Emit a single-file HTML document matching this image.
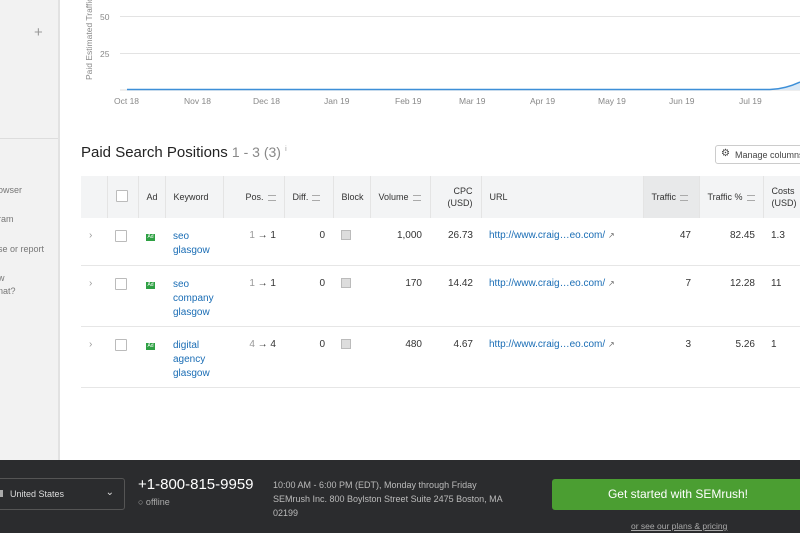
<!DOCTYPE html>
<html><head><meta charset="utf-8"><style>
*{box-sizing:border-box;margin:0;padding:0}
body{width:800px;height:533px;overflow:hidden;background:#fff;font-family:"Liberation Sans",sans-serif;color:#333;position:relative}
.side{position:absolute;left:0;top:0;width:60px;height:460px;background:#f2f2f2;border-right:2px solid #e2e2e2}
.side .sep{position:absolute;top:138px;left:0;width:58px;height:1px;background:#ddd}
.side .t{position:absolute;left:-2px;font-size:9px;color:#777;white-space:nowrap;line-height:13px}
.plus{position:absolute;left:34px;top:24px;font-size:15px;color:#999}
.ax{position:absolute;font-size:8.5px;color:#888}
.h{position:absolute;left:81px;top:144px;font-size:15px;color:#222}
.h span{color:#888;font-size:14px}
.mc{position:absolute;left:715px;top:145px;width:100px;height:19px;border:1px solid #ccc;border-radius:3px;font-size:9px;color:#444;padding:4px 0 0 19px;background:#fff;white-space:nowrap}
table{position:absolute;left:81px;top:176px;border-collapse:collapse;font-size:9px;table-layout:fixed;width:740px}
th{background:#f3f4f5;font-weight:normal;color:#333;height:42px;border-right:1px solid #e4e4e4;text-align:left;padding:0 8px;vertical-align:middle;font-size:9px;white-space:nowrap}
td{vertical-align:top;padding:12px 8px 0;border-bottom:1px solid #e6e6e6;font-size:10px;white-space:nowrap}
.r{text-align:right}
.s{display:inline-block;width:8px;height:6px;border-top:1px solid #aaa;border-bottom:1px solid #aaa;position:relative;margin-left:4px;vertical-align:middle}
a{color:#1a6db5;text-decoration:none}
.cb{display:inline-block;width:12px;height:12px;border:1px solid #bbb;background:#fff;border-radius:1px}
.ad{display:inline-block;width:9px;height:7px;background:#2ea043;color:#fff;font-size:5px;line-height:7px;text-align:center;margin-top:2px}
.blk{display:inline-block;width:10px;height:10px;background:#ddd;border:1px solid #bbb}
.foot{position:absolute;left:0;top:460px;width:800px;height:73px;background:#2b2c2e;color:#ccc}
.sel{position:absolute;left:-5px;top:18px;width:130px;height:32px;border:1px solid #555;border-radius:3px;font-size:9px;color:#ddd;padding:10px 0 0 14px}
.btn{position:absolute;left:552px;top:19px;width:252px;height:31px;background:#4b9e32;border-radius:3px;color:#fff;font-size:12px;text-align:center;line-height:31px}
</style></head><body>
<div class="side"><div class="plus">+</div><div class="sep"></div>
<div class="t" style="top:184px">owser</div><div class="t" style="top:213px">ram</div><div class="t" style="top:243px">se or report</div><div class="t" style="top:272px">w<br>nat?</div></div>
<div style="position:absolute;left:84px;font-size:8.5px;color:#888;transform:rotate(-90deg);transform-origin:left top;top:80px;white-space:nowrap">Paid Estimated Traffic</div>
<svg style="position:absolute;left:0;top:0" width="800" height="110">
<line x1="120" y1="16.5" x2="800" y2="16.5" stroke="#e3e3e3"/>
<line x1="120" y1="53.5" x2="800" y2="53.5" stroke="#e3e3e3"/>
<line x1="120" y1="90" x2="800" y2="90" stroke="#ddd"/>
<path d="M127 89.5 L770 89.5 Q785 89 800 82 L800 90 L127 90Z" fill="#dbe9f6"/>
<path d="M127 89.5 L770 89.5 Q785 89 800 82" stroke="#3d8fd8" stroke-width="1.5" fill="none"/>
</svg>
<div class="ax" style="left:100px;top:12px">50</div><div class="ax" style="left:100px;top:49px">25</div>
<div class="ax" style="left:114px;top:96px">Oct 18</div><div class="ax" style="left:184px;top:96px">Nov 18</div><div class="ax" style="left:253px;top:96px">Dec 18</div><div class="ax" style="left:324px;top:96px">Jan 19</div><div class="ax" style="left:395px;top:96px">Feb 19</div><div class="ax" style="left:459px;top:96px">Mar 19</div><div class="ax" style="left:530px;top:96px">Apr 19</div><div class="ax" style="left:598px;top:96px">May 19</div><div class="ax" style="left:669px;top:96px">Jun 19</div><div class="ax" style="left:739px;top:96px">Jul 19</div>
<div class="h">Paid Search Positions <span>1 - 3 (3)</span> <sup style="font-size:7px;color:#999">i</sup></div>
<div class="mc"><span style="position:absolute;left:5px;top:2px;font-size:10px">⚙</span>Manage columns</div>
<table>
<colgroup><col style="width:26px"><col style="width:31px"><col style="width:27px"><col style="width:58px"><col style="width:61px"><col style="width:49px"><col style="width:37px"><col style="width:60px"><col style="width:51px"><col style="width:162px"><col style="width:56px"><col style="width:64px"><col style="width:58px"></colgroup>
<tr><th></th><th><span class="cb"></span></th><th>Ad</th><th>Keyword</th><th class="r">Pos.<span class="s"></span></th><th>Diff.<span class="s"></span></th><th>Block</th><th>Volume<span class="s"></span></th><th class="r" style="line-height:12px">CPC<br>(USD)</th><th>URL</th><th style="background:#e8e9ea">Traffic<span class="s"></span></th><th>Traffic %<span class="s"></span></th><th style="line-height:12px">Costs<br>(USD)</th></tr>
<tr style="height:47px"><td style="color:#999">›</td><td><span class="cb"></span></td><td><span class="ad">Ad</span></td><td style="line-height:14px"><a>seo<br>glasgow</a></td><td class="r"><span style="color:#999">1</span> → 1</td><td class="r">0</td><td><span class="blk"></span></td><td class="r">1,000</td><td class="r">26.73</td><td><a>http://www.craig…eo.com/</a> <span style="color:#666;font-size:8px">↗</span></td><td class="r">47</td><td class="r">82.45</td><td>1.3</td></tr>
<tr style="height:61px"><td style="color:#999">›</td><td><span class="cb"></span></td><td><span class="ad">Ad</span></td><td style="line-height:14px"><a>seo<br>company<br>glasgow</a></td><td class="r"><span style="color:#999">1</span> → 1</td><td class="r">0</td><td><span class="blk"></span></td><td class="r">170</td><td class="r">14.42</td><td><a>http://www.craig…eo.com/</a> <span style="color:#666;font-size:8px">↗</span></td><td class="r">7</td><td class="r">12.28</td><td>11</td></tr>
<tr style="height:61px"><td style="color:#999">›</td><td><span class="cb"></span></td><td><span class="ad">Ad</span></td><td style="line-height:14px"><a>digital<br>agency<br>glasgow</a></td><td class="r"><span style="color:#999">4</span> → 4</td><td class="r">0</td><td><span class="blk"></span></td><td class="r">480</td><td class="r">4.67</td><td><a>http://www.craig…eo.com/</a> <span style="color:#666;font-size:8px">↗</span></td><td class="r">3</td><td class="r">5.26</td><td>1</td></tr>
</table>
<div class="foot">
<div class="sel"><span style="position:absolute;left:4px;top:11px;width:3px;height:7px;background:#aaa"></span>United States<span style="position:absolute;right:10px;top:8px;font-size:10px">⌄</span></div>
<div style="position:absolute;left:138px;top:16px;font-size:15px;color:#fff">+1-800-815-9959</div>
<div style="position:absolute;left:138px;top:37px;font-size:9px;color:#aaa">○ offline</div>
<div style="position:absolute;left:273px;top:18px;font-size:9px;color:#bbb;line-height:14px">10:00 AM - 6:00 PM (EDT), Monday through Friday<br>SEMrush Inc. 800 Boylston Street Suite 2475 Boston, MA<br>02199</div>
<div class="btn">Get started with SEMrush!</div>
<div style="position:absolute;left:631px;top:61px;font-size:8.5px;color:#aaa;text-decoration:underline">or see our plans &amp; pricing</div>
</div>
</body></html>
